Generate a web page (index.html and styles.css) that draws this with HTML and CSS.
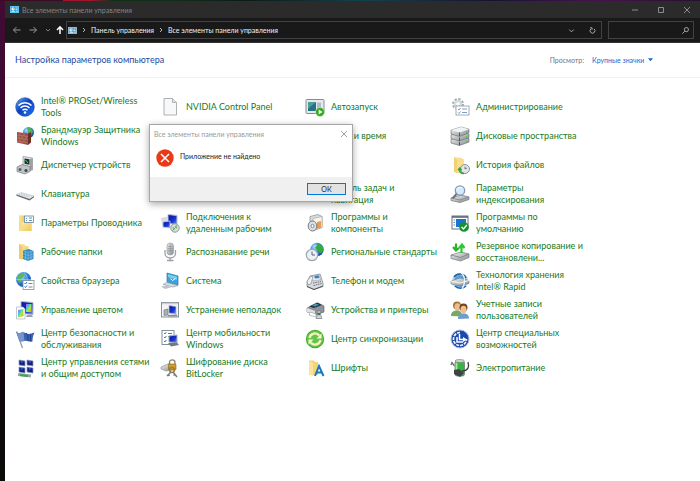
FILE: index.html
```html
<!DOCTYPE html>
<html lang="ru">
<head>
<meta charset="utf-8">
<meta name="viewport" content="width=device-width, initial-scale=1">
<title>Все элементы панели управления</title>
<link rel="stylesheet" href="styles.css">
</head>
<body>
<svg class="defs" aria-hidden="true">
  <defs>
    <linearGradient id="blue" x1="0" y1="0" x2="1" y2="1"><stop offset="0" stop-color="#6cb0f5"/><stop offset=".45" stop-color="#0c3fc0"/><stop offset="1" stop-color="#1e78ea"/></linearGradient>
    <linearGradient id="screen" x1="0" y1="0" x2="1" y2="1"><stop offset="0" stop-color="#06119a"/><stop offset=".6" stop-color="#1a35d0"/><stop offset="1" stop-color="#6c95ee"/></linearGradient>
    <linearGradient id="metal" x1="0" y1="0" x2="1" y2="1"><stop offset="0" stop-color="#f4f5f6"/><stop offset="1" stop-color="#85898d"/></linearGradient>
    <linearGradient id="folder" x1="0" y1="0" x2="1" y2="1"><stop offset="0" stop-color="#fbe7a6"/><stop offset="1" stop-color="#f0c95c"/></linearGradient>
    <radialGradient id="globe" cx=".35" cy=".3" r=".8"><stop offset="0" stop-color="#b9e4fb"/><stop offset=".5" stop-color="#2f83d8"/><stop offset="1" stop-color="#0b3c9a"/></radialGradient>
    <linearGradient id="rainbow" x1="0" y1="0" x2="1" y2="1"><stop offset="0" stop-color="#ff3ad0"/><stop offset=".3" stop-color="#29c5ff"/><stop offset=".6" stop-color="#a7ee2e"/><stop offset="1" stop-color="#ff8a1e"/></linearGradient>
    <symbol id="cpl" viewBox="0 0 18 14"><rect width="18" height="14" rx="1" fill="#6fd0fa"/><rect x="1.5" y="1.5" width="15" height="11" fill="#239be0"/><circle cx="6" cy="6" r="3.3" fill="#d8f1ff"/><path d="M6 6V2.700a3.300 3.300 0 0 1 3.300 3.300z" fill="#f6b63c"/><path d="M11 4h4M11 7h4M3 11h7" stroke="#fff" stroke-width="1.400"/><rect x="11.500" y="9.500" width="4" height="2" fill="#bfeaff"/></symbol>
  </defs>
</svg>
<div class="desktop">
<div class="window">
  <header class="titlebar">
    <svg class="cpl"><use href="#cpl"/></svg>
    <h1>Все элементы панели управления</h1>
    <div class="controls">
      <button type="button" aria-label="Свернуть"><svg viewBox="0 0 8 8"><path d="M1 4h6"/></svg></button>
      <button type="button" aria-label="Развернуть"><svg viewBox="0 0 8 8"><path d="M1.500 1.500h5v5h-5z"/></svg></button>
      <button type="button" aria-label="Закрыть"><svg viewBox="0 0 8 8"><path d="M1 1l6 6M7 1L1 7"/></svg></button>
    </div>
  </header>
  <nav class="navbar">
    <div class="history">
      <button type="button" aria-label="Назад"><svg viewBox="0 0 10 10"><path d="M8.500 5h-7M4.500 2L1.500 5l3 3"/></svg></button>
      <button type="button" aria-label="Вперёд"><svg viewBox="0 0 10 10"><path d="M1.500 5h7M5.500 2l3 3-3 3"/></svg></button>
      <button type="button" class="small" aria-label="Последние"><svg viewBox="0 0 10 10"><path d="M2.500 4L5 6.300 7.500 4"/></svg></button>
      <button type="button" class="up" aria-label="Вверх"><svg viewBox="0 0 10 10"><path d="M5 9V2M2 5l3-3.200L8 5"/></svg></button>
    </div>
    <div class="address">
      <svg class="cpl"><use href="#cpl"/></svg>
      <svg class="sep" viewBox="0 0 6 6"><path d="M2 1l2 2-2 2"/></svg>
      <a href="#">Панель управления</a>
      <svg class="sep" viewBox="0 0 6 6"><path d="M2 1l2 2-2 2"/></svg>
      <a href="#">Все элементы панели управления</a>
      <button type="button" class="first" aria-label="Журнал"><svg viewBox="0 0 10 10"><path d="M2.500 4L5 6.500 7.500 4"/></svg></button>
      <button type="button" aria-label="Обновить"><svg viewBox="0 0 10 10"><path d="M3.200 3.200A2.700 2.700 0 1 0 6.800 3.200M2.300 2h2.200v2.200"/></svg></button>
    </div>
    <div class="search">
      <input type="search" aria-label="Поиск">
      <button type="button" aria-label="Найти"><svg viewBox="0 0 10 10"><circle cx="6" cy="4" r="2.300"/><path d="M4.300 5.700L1.500 8.500"/></svg></button>
    </div>
  </nav>
  <main>
    <div class="heading">
      <h2>Настройка параметров компьютера</h2>
      <label for="view">Просмотр:</label>
      <span class="view"><select id="view"><option>Крупные значки</option></select><svg viewBox="0 0 6 4"><path d="M0 0h6L3 3.500z"/></svg></span>
    </div>
    <ul class="items">
      <li><a href="#"><svg viewBox="0 0 20 20"><circle cx="10" cy="10" r="9.300" fill="url(#blue)" stroke="#1746ac" stroke-width=".6"/><path d="M3.500 8.500a9 9 0 0 1 13 0M5.500 11a6.300 6.300 0 0 1 9 0M7.500 13.300a3.500 3.500 0 0 1 5 0" fill="none" stroke="#fff" stroke-width="1.500"/><circle cx="10" cy="15.500" r="1.300" fill="#fff"/></svg><span>Intel® PROSet/Wireless Tools</span></a></li>
      <li><a href="#"><svg viewBox="0 0 20 20"><path d="M4 1.500h8.500L16.500 5.500V18H4z" fill="#f7f8f8" stroke="#9b9fa2" stroke-width=".8"/><path d="M12.500 1.500v4h4" fill="#dcdfe1" stroke="#9b9fa2" stroke-width=".7"/></svg><span>NVIDIA Control Panel</span></a></li>
      <li><a href="#"><svg viewBox="0 0 20 20"><rect x="1" y="2.500" width="18" height="14" rx="1" fill="#e6e9ec" stroke="#858c95"/><rect x="3" y="5" width="8" height="9" fill="#287085"/><path d="M3 5h8L3 12z" fill="#4c9c98"/><path d="M13 5.500v8M15 5.500v8" stroke="#7691b3"/><circle cx="15" cy="15" r="4.500" fill="#32a91c" stroke="#d9f4d2" stroke-width=".6"/><path d="M13.700 12.500L17.500 15l-3.800 2.500z" fill="#fff"/></svg><span>Автозапуск</span></a></li>
      <li><a href="#"><svg viewBox="0 0 20 20"><circle cx="8" cy="7" r="4.500" fill="#dbe2e6" stroke="#a2adb3" stroke-width="3" stroke-dasharray="2 1.500"/><circle cx="8" cy="7" r="4" fill="#d6dde0"/><circle cx="8" cy="7" r="1.700" fill="#fff"/><rect x="6" y="9" width="13" height="9" fill="#fff" stroke="#929aa1" stroke-width=".8"/><path d="M8 12l1 1 1.500-2M8 15.500l1 1 1.500-2M12 12h5M12 15.500h5" fill="none" stroke="#5884bd" stroke-width=".8"/></svg><span>Администрирование</span></a></li>

      <li><a href="#"><svg viewBox="0 0 20 20"><circle cx="13.500" cy="6.500" r="5.500" fill="url(#globe)"/><path d="M12 2c3-1 5 1 6 4l-3 3-2-3z" fill="#4eb548"/><path d="M2 6l11 1.500V19L2 16.500z" fill="#9b5043"/><path d="M13 7.500L16 6v10.500L13 19z" fill="#6e2d27"/><path d="M2 9l11 1.500M2 12l11 1.500M2 15l11 1.500M5 6.500v3M9 7v3M7 9.700v3M4 9.500v3M11 10v3M5 12.500v3M9 13v3M7 16v2" stroke="#c98d78" stroke-width=".5"/></svg><span>Брандмауэр Защитника Windows</span></a></li>
      <li></li>
      <li><a href="#"><svg viewBox="0 0 20 20"></svg><span>Дата и время</span></a></li>
      <li><a href="#"><svg viewBox="0 0 20 20"><g stroke="#62676a" stroke-width=".6"><path d="M1 13.500L11 10.500l8 2v3.500L9.500 19.500 1 17z" fill="url(#metal)"/><path d="M1 9L11 6l8 2v3.500L9.500 15 1 12.500z" fill="url(#metal)"/><path d="M1 4.200L11 1l8 2.200v3.500L9.500 10.500 1 8z" fill="url(#metal)"/></g><path d="M1 4.200L11 1l8 2.200-9.500 3.200z" fill="#f1f2f2"/><path d="M9.500 6.500v3.500M9.500 11.500V15M9.500 16v3.300" stroke="#505457"/><path d="M16 6l1-.4M16 11l1-.4M16 15.500l1-.4" stroke="#42c93c" stroke-width="1.500"/></svg><span>Дисковые пространства</span></a></li>

      <li><a href="#"><svg viewBox="0 0 20 20"><path d="M8 1.500L17.500 3v12L8 13z" fill="#e2e4e5" stroke="#8b9196" stroke-width=".7"/><path d="M9.500 3.500l5 .8v5.500l-5-1z" fill="#143728"/><path d="M10.500 5l2.500 3" stroke="#45dd55"/><path d="M15 4l2.500-1V15L15 16z" fill="#9da2a6"/><path d="M2 12l5-2.500 8 2v5L10 19l-8-2.500z" fill="#bfc3c6" stroke="#62686d" stroke-width=".6"/><circle cx="5" cy="14.500" r="1.500" fill="#565f67"/><circle cx="11" cy="15.500" r="1.600" fill="#3f4951"/></svg><span>Диспетчер устройств</span></a></li>
      <li></li>
      <li></li>
      <li><a href="#"><svg viewBox="0 0 20 20"><path d="M4 2l8 1v15l-8-1.500z" fill="url(#folder)"/><path d="M4 2l3 2.500V18.500L4 16.500z" fill="#f1d173"/><path d="M7 4.500L14 4v13l-7 1.500z" fill="#f9df8f"/><circle cx="15" cy="14" r="4.500" fill="#e2e7e9" stroke="#8b9499"/><path d="M15 11.500V14l2-1" fill="none" stroke="#5b6266" stroke-width=".8"/><path d="M14 18.500c-3.500 0-5-2-4.500-4.500M8 15l2-2 1.500 2.500" fill="none" stroke="#27a448" stroke-width="1.500"/></svg><span>История файлов</span></a></li>

      <li><a href="#"><svg viewBox="0 0 20 20"><path d="M1.500 10.500L6 8.500l13 3.500-4.500 3z" fill="#f2f4f5" stroke="#b4babf" stroke-width=".5"/><path d="M1.500 10.500L14.500 15l4.500-3v1.200L14.500 16.500 1.500 11.700z" fill="#61686e"/><path d="M4 10.300l10.500 3M6 9.400L16.500 12.300" stroke="#a1a9b0" stroke-width=".7" stroke-dasharray="1.200 .5"/></svg><span>Клавиатура</span></a></li>
      <li></li>
      <li><a href="#"><svg viewBox="0 0 20 20"><rect x="1" y="3" width="18" height="14.500" fill="#d4dde6"/><rect x="1" y="13.500" width="18" height="4" fill="#172344"/></svg><span>Панель задач и<br>навигация</span></a></li>
      <li><a href="#"><svg viewBox="0 0 20 20"><path d="M1 14l10-3 8 2v2.500L10 18.500 1 16.500z" fill="url(#metal)" stroke="#6f7578" stroke-width=".7"/><path d="M1 14l9 2 9-3" fill="none" stroke="#777c80" stroke-width=".7"/><circle cx="10" cy="6.500" r="4.700" fill="#d2eafb" stroke="#8999a8" stroke-width="1.300"/><path d="M7 6c1-3 4-3 5-2" fill="none" stroke="#fff"/><path d="M6.500 10l-4 4.500" stroke="#65778a" stroke-width="2"/></svg><span>Параметры<br>индексирования</span></a></li>

      <li><a href="#"><svg viewBox="0 0 20 20"><path d="M4 2.500h5l1.500 1.500h6V18H4z" fill="#f2ce68"/><path d="M4 3h3v15H4z" fill="#f9dc84"/><path d="M7 9h9.500v9H7z" fill="url(#folder)"/><rect x="9.500" y="3" width="9" height="6.500" fill="#f8fbfd" stroke="#69849c" stroke-width=".8"/><path d="M11 5l1 1M14 5h3M11 7.500h1M14 7.500h3" stroke="#397cb5" stroke-width=".8"/></svg><span>Параметры Проводника</span></a></li>
      <li><a href="#"><svg viewBox="0 0 20 20"><path d="M8 1.500l9 1v9l-9-1z" fill="url(#screen)" stroke="#b9c2cc"/><path d="M1 5l7-1.500v9L2.500 15z" fill="#d5dbe1"/><path d="M3 9l7-1v7l-7-1z" fill="url(#screen)" stroke="#c5cdd5" stroke-width=".8"/><circle cx="15" cy="15" r="4.200" fill="#d7dddf" stroke="#91999d"/><path d="M12.700 14.500l2 1.200-2 1.500M17 12.500l-1.800 1.500 1.800 1" fill="none" stroke="#36a642"/></svg><span>Подключения к<br>удаленным рабочим</span></a></li>
      <li><a href="#"><svg viewBox="0 0 20 20"><path d="M5 3.500L13 1.500l4 2v11l-9 3-3-1.500z" fill="#d9dddd" stroke="#868b8b" stroke-width=".7"/><path d="M8 5.500l9-2v11l-9 3z" fill="#f7f6f1" stroke="#9a9e9f" stroke-width=".6"/><path d="M12 9l4-1v6.500l-4 1.500z" fill="#f19a43"/><ellipse cx="7.500" cy="13" rx="4.300" ry="5" fill="#dfe3e6" stroke="#73797e"/><ellipse cx="7.500" cy="13" rx="1.500" ry="1.800" fill="#fff" stroke="#6d747a" stroke-width=".8"/></svg><span>Программы и<br>компоненты</span></a></li>
      <li><a href="#"><svg viewBox="0 0 20 20"><rect x="2" y="3" width="16" height="13" fill="#fff" stroke="#6c747a"/><path d="M2 4h16" stroke="#56616a" stroke-width="1.500"/><rect x="6" y="6" width="10" height="8" fill="#1975d0"/><path d="M3.500 7h1.500M3.500 9.500h1.500M3.500 12h1.500" stroke="#6a8aa8"/><circle cx="14" cy="14" r="4.800" fill="#14932b"/><path d="M11.500 14l2 2 3.300-4" fill="none" stroke="#fff" stroke-width="1.300"/></svg><span>Программы по<br>умолчанию</span></a></li>

      <li><a href="#"><svg viewBox="0 0 20 20"><path d="M4 2h5l1.500 2h3v13H4z" fill="url(#folder)"/><path d="M4 2l3.500 2.500V18L4 16z" fill="#edca6b"/><path d="M8 8.500l6-1.500 4.500 2v8L13 19l-5-2z" fill="#388cc5"/><path d="M8 8.500l5 2L18.500 9M13 10.500V19M8 11.500l5 2 5.500-1.500M8 14.500l5 2 5.500-2M10.500 9.500v8.500M16 9.700v8.300" fill="none" stroke="#7cbde2" stroke-width=".7"/></svg><span>Рабочие папки</span></a></li>
      <li><a href="#"><svg viewBox="0 0 20 20"><rect x="7" y="1" width="6.500" height="12" rx="3.200" fill="url(#metal)" stroke="#8c9298" stroke-width=".6"/><path d="M8 4.500h4.500M8 6.500h4.500M8 8.500h4.500M10.200 2v8" stroke="#878e95" stroke-width=".6"/><path d="M5 8v3c0 6.500 10.500 6.500 10.500 0V8M10.200 15.500V18M7 18.500h6.500" fill="none" stroke="#9ba1a7" stroke-width="1.300"/></svg><span>Распознавание речи</span></a></li>
      <li><a href="#"><svg viewBox="0 0 20 20"><circle cx="12" cy="7.500" r="6.700" fill="url(#globe)"/><path d="M11 1.500c2 1 1 3-1 4 1 2 3 1 3 4l3 2c3-2 3-7 0-9z" fill="#35aa3f"/><circle cx="7" cy="13" r="5.700" fill="#eef1f3" stroke="#a1a9b2" stroke-width="1.300"/><path d="M7 9.500V13h3" fill="none" stroke="#4e6682"/></svg><span>Региональные стандарты</span></a></li>
      <li><a href="#"><svg viewBox="0 0 20 20"><path d="M1 13l10-3 8 2v3.500L10.500 19 1 16.500z" fill="url(#metal)" stroke="#747c81" stroke-width=".7"/><path d="M1 13l9.500 2.500L19 12" fill="none" stroke="#6d7477" stroke-width=".7"/><path d="M6 1.500v6M3 5l3 3.500 3-2.500" fill="none" stroke="#25b529" stroke-width="2.200"/><path d="M11.500 11V4M9 6l3-3.500L14.500 6" fill="none" stroke="#2dc830" stroke-width="2.200"/></svg><span>Резервное копирование и восстановлени...</span></a></li>

      <li><a href="#"><svg viewBox="0 0 20 20"><circle cx="8.500" cy="8.500" r="7.500" fill="url(#globe)"/><path d="M4 3c3-2 5-1 6 1L7 7 5 12c-3-2-4-6-1-9z" fill="#5bb663"/><path d="M8.500 1c5 4 5 10 0 15M1 8.500h15" fill="none" stroke="#c6e2ef" stroke-width=".5"/><rect x="8" y="9.500" width="11" height="9" fill="#fff" stroke="#858c92" stroke-width=".8"/><path d="M9.500 12l1 1 1.500-2M9.500 15.500l1 1 1.500-2" fill="none" stroke="#237bc4"/><path d="M13.500 12.500h4M13.500 16h4" stroke="#7a8690"/></svg><span>Свойства браузера</span></a></li>
      <li><a href="#"><svg viewBox="0 0 20 20"><path d="M7 2l11 3v9l-11-3z" fill="#35a5e3" stroke="#3577a3" stroke-width=".7"/><path d="M8 3.300l9 2.500v3L8 6z" fill="#79ceef"/><path d="M10.500 7.500l2 2 3-2" fill="none" stroke="#fff"/><path d="M7 11.500L18 14.500l-5 1.500-10-2.500z" fill="#d8dfe4" stroke="#7e8d99" stroke-width=".6"/><path d="M1 15.500l6-1 4 2-6 1.500z" fill="#bdc5ca"/></svg><span>Система</span></a></li>
      <li><a href="#"><svg viewBox="0 0 20 20"><path d="M2 11l3-6 10-2 3 9v3.500L9 18.500l-7-3z" fill="#d7dade" stroke="#7b8389" stroke-width=".7"/><path d="M6 5.500l8-1.500 1.500 5L5 10z" fill="#e8ebed" stroke="#939ba1" stroke-width=".5"/><path d="M9.500 5l4-.5.800 2.500-4.500.5z" fill="#3181c5"/><path d="M2 10l4-5 2 1-2 7-3 1z" fill="#eceff0" stroke="#777e84" stroke-width=".6"/><path d="M8 12l8-1.500M8.500 14.500l8-2" stroke="#697077" stroke-dasharray="1.500 .8"/><path d="M2 15.500l7 3L18 15" fill="none" stroke="#51585e"/></svg><span>Телефон и модем</span></a></li>
      <li><a href="#"><svg viewBox="0 0 20 20"><circle cx="10" cy="10" r="7" fill="#5aa0d8" stroke="#bdd3e7" stroke-width="2"/><path d="M4 6c4-5 11-3 12 1M16 15c-3 3-8 3-11 0" fill="none" stroke="#1b62aa" stroke-width="1.500"/><path d="M1 10l9-3 9 2.500v3L10 15l-9-2z" fill="url(#metal)" stroke="#687986" stroke-width=".6"/><path d="M1 10l9 2 9-2.500" fill="none" stroke="#f7fafb"/><path d="M11 2c4 2 5 10 1 16" fill="none" stroke="#e8f5ff" stroke-width="1.200"/></svg><span>Технология хранения Intel® Rapid</span></a></li>

      <li><a href="#"><svg viewBox="0 0 20 20"><path d="M6 1.500l12 1v12l-12-1z" fill="url(#screen)" stroke="#b4bbc3"/><path d="M11 4h5.500v8H11z" fill="url(#rainbow)"/><path d="M12 15h5l1 2h-7z" fill="#9ca3ad"/><path d="M1.500 7H8l2 2v10H1.500z" fill="#fff" stroke="#aeb3bb" stroke-width=".7"/><path d="M3 10l5.500-1v7L3 17.500z" fill="url(#rainbow)"/></svg><span>Управление цветом</span></a></li>
      <li><a href="#"><svg viewBox="0 0 20 20"><rect x="1.500" y="2.500" width="17" height="14.500" fill="#f5f5f5" stroke="#878f97"/><path d="M2 3.500h16" stroke="#c9cdd1" stroke-width="1.500"/><path d="M9 5.500l7 1v7.500l-7-1z" fill="url(#screen)" stroke="#b4bbc5" stroke-width=".8"/><path d="M4 10l4-1v6l-4 .5z" fill="#a9b2bb" stroke="#636c76" stroke-width=".6"/><path d="M8 15l9-.5.500 2H8z" fill="#888f98"/></svg><span>Устранение неполадок</span></a></li>
      <li><a href="#"><svg viewBox="0 0 20 20"><path d="M2 8l11-5 6 3v6l-8 3-9-3z" fill="#8c9399" stroke="#545a60" stroke-width=".6"/><path d="M4 6.500l8-4 5 2.500-8 3z" fill="#2a333a"/><path d="M7 5.500l4-2 3 1.300-4 1.700z" fill="#3d98ca"/><path d="M2 8l8 3v4l-8-3z" fill="#dfe3e6"/><path d="M5 12l6 2v3l-7-2z" fill="#fff" stroke="#7b8389" stroke-width=".5"/><path d="M12 11h4l-1 2 2 5.500h-6l2-5z" fill="#d2d6d9" stroke="#737b82" stroke-width=".7"/><circle cx="14" cy="14" r="1.300" fill="#59626a"/></svg><span>Устройства и принтеры</span></a></li>
      <li><a href="#"><svg viewBox="0 0 20 20"><circle cx="7" cy="5.500" r="4" fill="#a6753b"/><ellipse cx="7.500" cy="7" rx="3" ry="3.800" fill="#efbd8c"/><path d="M1 16c0-4 2.500-5.500 6-5.500s5 2 5 6z" fill="#76a967"/><circle cx="13.500" cy="7.500" r="4" fill="#704523"/><ellipse cx="13.500" cy="9.500" rx="3" ry="3.700" fill="#edbd94"/><path d="M8 19c0-4 2-5.500 5.500-5.500S19 15 19 18.500z" fill="#6f9cce"/></svg><span>Учетные записи<br>пользователей</span></a></li>

      <li><a href="#"><svg viewBox="0 0 20 20"><path d="M1.500 2.500L7.500 19" stroke="#939da8" stroke-width="1.300"/><path d="M1.500 3c4 3 5-1.500 9 1 3 1.500 5 1 9-.500-2 4-2 6-2 9-4 1-5-1.500-8-.500-2 .5-3.500.5-5 0z" fill="#3961ac"/><path d="M1.500 3c4 3 5-1 7 0l1 8.500c-2 .5-4 1.500-5 .5z" fill="#7595cd"/><path d="M11 4c2 1 2 4 2 8M15.500 5v7" stroke="#1c438f" fill="none"/></svg><span>Центр безопасности и обслуживания</span></a></li>
      <li><a href="#"><svg viewBox="0 0 20 20"><rect x="2" y="1.500" width="12" height="14" fill="#fff" stroke="#848e98"/><path d="M4 4l1 1 1.300-2M4 8l1 1 1.300-2M4 12l1 1 1.300-2" fill="none" stroke="#318bce"/><path d="M8 4.500h4M8 7.500h2" stroke="#697b8a"/><path d="M9 7l8-1v7.500l-8-.5z" fill="url(#screen)" stroke="#a4acb6"/><path d="M8 14l9-.500 2 2.500-8 1.500z" fill="#707a88"/></svg><span>Центр мобильности<br>Windows</span></a></li>
      <li><a href="#"><svg viewBox="0 0 20 20"><circle cx="10" cy="10" r="9.200" fill="#45ae32"/><circle cx="10" cy="10" r="8.200" fill="#65c44a"/><path d="M4.500 9c1-5 7-6 9.800-2.500M15.500 11c-1 5-7 6-9.800 2.500" fill="none" stroke="#f5f6bd" stroke-width="2.300"/><path d="M16.500 4.500v5h-5zM3.500 15.500v-5h5z" fill="#fcfad0"/></svg><span>Центр синхронизации</span></a></li>
      <li><a href="#"><svg viewBox="0 0 20 20"><circle cx="10" cy="10" r="9" fill="#1c49af" stroke="#a7b9dc"/><path d="M10 3.500a6.500 6.500 0 1 0 6.500 6.500" fill="none" stroke="#f5f8ff" stroke-width="1.700" stroke-dasharray="3 1"/><path d="M9.500 5v5.500H14M7 8v5h6" fill="none" stroke="#fff" stroke-width="1.500"/><path d="M13 8l4 2.500-4 2.500z" fill="#fff"/></svg><span>Центр специальных возможностей</span></a></li>

      <li><a href="#"><svg viewBox="0 0 20 20"><g fill="#132080" stroke="#8796bd" stroke-width=".7"><path d="M4 2l6 1v5L4 7zM12 2l6 1v5l-6-1zM4 9l6 1v5l-6-1zM12 9l6 1v5l-6-1z"/></g><path d="M5.500 3l3 .5-2 2zM13.500 3l3 .5-2 2zM5.500 10l3 .5-2 2zM13.500 10l3 .5-2 2z" fill="#3458ca"/><path d="M3 16.500l13 1.500" stroke="#9aa6a9" stroke-width="3"/><path d="M5 17l8 1" stroke="#37a74a" stroke-width="2"/></svg><span>Центр управления сетями и общим доступом</span></a></li>
      <li><a href="#"><svg viewBox="0 0 20 20"><path d="M1 9l8-3.500 5 2v4L6 13l-5-2z" fill="url(#metal)" stroke="#858b8c" stroke-width=".6"/><path d="M9.500 7V4.500C9.500 1 15 1 15 4.500V7" fill="none" stroke="#8f866b" stroke-width="1.300"/><rect x="8.500" y="6" width="7.500" height="6" rx="1" fill="#d19d34" stroke="#82601b" stroke-width=".6"/><circle cx="12" cy="12" r="2.400" fill="none" stroke="#a67b25" stroke-width="1.500"/><path d="M11 14l-4 4M13 14l4 5M8.500 16.500l1 1.500M15 16.500l-1.500 1" stroke="#777c79" stroke-width="1.500"/></svg><span>Шифрование диска<br>BitLocker</span></a></li>
      <li><a href="#"><svg viewBox="0 0 20 20"><path d="M4 2.500h5l1 1.500h3v13H4z" fill="#f5d477"/><path d="M4 3l4 2v13l-4-1.500z" fill="#fbe39c"/><path d="M10 18l4-10 4.500 10M11.500 14.500h5.500" fill="none" stroke="#1977bd" stroke-width="2"/></svg><span>Шрифты</span></a></li>
      <li><a href="#"><svg viewBox="0 0 20 20"><rect x="5" y="3" width="9.500" height="15" rx="2" fill="#35b544" stroke="#6f8374" stroke-width=".8"/><path d="M6.500 5v11" stroke="#a4eda0" stroke-width="1.800"/><ellipse cx="9.700" cy="3" rx="4.700" ry="1.500" fill="#d0d8d0" stroke="#69746b" stroke-width=".6"/><path d="M1.500 4l3 4M2 4l-1 3" stroke="#69716e" stroke-width="1.300"/><path d="M18 4c1.500 5 0 9-6 9" fill="none" stroke="#353c3b" stroke-width="1.300"/><path d="M4 12l5-1 5 4-4 4-6-3z" fill="#3d4544"/></svg><span>Электропитание</span></a></li>
    </ul>
  </main>
  <section class="dialog" role="dialog" aria-labelledby="dialog-title">
    <header><h3 id="dialog-title">Все элементы панели управления</h3><button type="button" aria-label="Закрыть"><svg viewBox="0 0 8 8"><path d="M1 1l6 6M7 1L1 7"/></svg></button></header>
    <div class="message"><svg viewBox="0 0 18 18"><circle cx="9" cy="9" r="8.700" fill="#e93a17"/><path d="M5 5l8 8M13 5l-8 8" stroke="#fff" stroke-width="1.500"/></svg><p>Приложение не найдено</p></div>
    <footer><button type="button">ОК</button></footer>
  </section>
</div>
</div>
</body>
</html>
```

FILE: styles.css
```css
* { box-sizing: border-box; }
body, h1, h2, h3, p, ul { margin: 0; padding: 0; font-weight: 400; }
body {
  font-family: Lato, "Noto Sans", sans-serif;
  font-size: 9px;
  line-height: 12px;
}
button, input, select { font: inherit; color: inherit; border: 0; margin: 0; padding: 0; background: none; }
button { display: flex; align-items: center; justify-content: center; }
a { color: inherit; text-decoration: none; }
svg { display: block; flex: none; }
.defs { position: absolute; width: 0; height: 0; }

.desktop {
  min-height: 100vh;
  padding: 1px 0 0 5px;
  display: flex;
  background:
    linear-gradient(90deg, #3b0a26 0 9%, #a0152c 9% 13%, #123018 16% 24%, #0b1b18 35%, #12424b 52%, #171234 70%, #4a1150 86%, #24102d) top / 100% 1px no-repeat,
    linear-gradient(#410b33, #39072c 45%, #12040f 75%, #0a0c08);
}
.window {
  position: relative;
  flex: 1;
  min-width: 0;
  display: flex;
  flex-direction: column;
  background: #fff;
}

.titlebar {
  height: 17px;
  display: flex;
  align-items: center;
  gap: 3px;
  padding-left: 5px;
  background: #2b2b2b;
  color: #858585;
}
.titlebar h1, .navbar { font-size: 7px; line-height: 12px; }
.cpl { width: 9px; height: 7px; }
.controls { margin-left: auto; display: flex; }
.controls button { width: 26px; height: 17px; }
.controls svg { width: 8px; height: 8px; fill: none; stroke: #8c8c8c; stroke-width: 1; }

.navbar {
  height: 25px;
  display: flex;
  align-items: center;
  gap: 6px;
  padding: 0 6px 0 4px;
  background: #191919;
  border-bottom: 1px solid #333;
  color: #f1f1f1;
}
.navbar svg { fill: none; stroke: #b4b4b4; }
.history { display: flex; }
.history button { width: 16px; height: 17px; }
.history svg { width: 10px; height: 10px; stroke: #999; }
.history .small { width: 13px; }
.history .small svg { width: 8px; height: 8px; }
.history .up { width: 11px; }
.history .up svg { stroke: #fff; stroke-width: 1.5; }
.address, .search {
  height: 18px;
  display: flex;
  align-items: center;
  border: 1px solid #424242;
}
.address { flex: 1; min-width: 0; gap: 4px; padding-left: 1px; margin-left: -5px; }
.address .sep { width: 6px; height: 6px; }
.address button { width: 17px; height: 16px; }
.address .first { margin-left: auto; }
.address button svg, .search svg { width: 9px; height: 9px; }
.search { width: 86px; }
.search input { flex: 1; min-width: 0; height: 16px; outline: 0; }
.search button { width: 16px; height: 16px; }

main { flex: 1; }
.heading {
  height: 35px;
  display: flex;
  align-items: center;
  padding: 0 47px 0 10px;
  border-bottom: 1px solid #edf3fa;
}
.heading h2 { font-size: 9px; color: #1f4a9b; margin-right: auto; }
.heading label { font-size: 7px; color: #6d7486; margin-right: 8px; }
.view { display: flex; align-items: center; gap: 3px; font-size: 7px; color: #1a66cc; }
.view select { appearance: none; cursor: pointer; }
.view svg { width: 5px; height: 4px; fill: #1a66cc; }

.items {
  list-style: none;
  padding: 14px 10px;
  display: grid;
  grid-template-columns: repeat(auto-fill, 145px);
  grid-auto-rows: 29px;
}
.items a {
  height: 29px;
  display: flex;
  align-items: center;
  gap: 6px;
  padding-right: 4px;
  color: #167a1e;
}
.items svg { width: 20px; height: 20px; }

.dialog {
  position: absolute;
  left: 144px;
  top: 123px;
  width: 204px;
  display: flex;
  flex-direction: column;
  background: #fff;
  border: 1px solid #a5a5a5;
  box-shadow: 0 2px 7px rgba(0, 0, 0, .35);
}
.dialog header { height: 17px; display: flex; align-items: center; justify-content: space-between; padding: 0 4px; }
.dialog h3 { font-size: 7px; color: #999; }
.dialog header button { width: 9px; height: 9px; }
.dialog header svg { width: 8px; height: 8px; fill: none; stroke: #888; stroke-width: .8; }
.message { height: 35px; display: flex; align-items: flex-start; gap: 6px; padding: 7px 6px; }
.message svg { width: 18px; height: 18px; }
.message p { font-size: 7px; line-height: 14px; color: #222; }
.dialog footer { height: 24px; display: flex; align-items: center; justify-content: flex-end; padding: 0 6px; background: #f0f0f0; }
.dialog footer button { width: 39px; height: 12px; font-size: 7px; line-height: 8px; background: #e2e2e2; border: 1px solid #0078d7; color: #222; }
```
